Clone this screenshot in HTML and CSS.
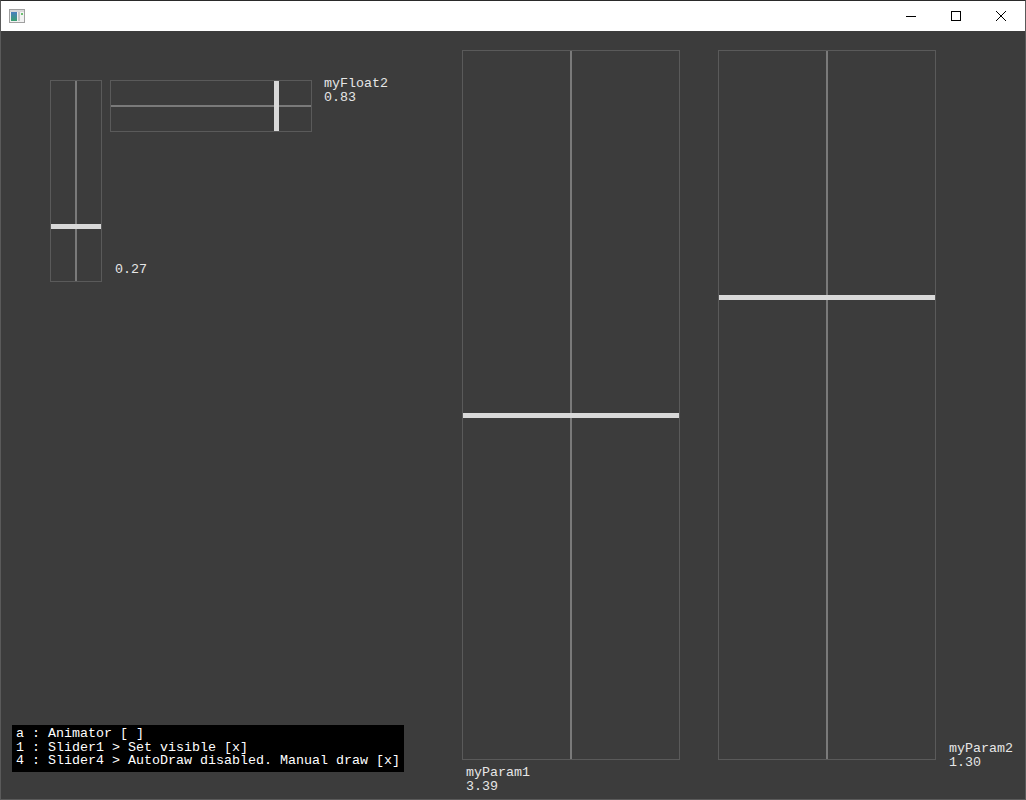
FILE: index.html
```html
<!DOCTYPE html>
<html>
<head>
<meta charset="utf-8">
<link rel="stylesheet" href="styles.css">
</head>
<body>
<div class="window">
  <div class="titlebar">
    <svg class="appicon" width="16" height="14" viewBox="0 0 16 14">
      <defs>
        <linearGradient id="g" x1="0" y1="0" x2="0" y2="1">
          <stop offset="0" stop-color="#4a7fc0"/>
          <stop offset="1" stop-color="#3aa070"/>
        </linearGradient>
      </defs>
      <rect x="0.5" y="0.5" width="15" height="13" fill="#f2f2f2" stroke="#a0a0a0"/>
      <rect x="1" y="1" width="14" height="2" fill="#d8d8d8"/>
      <rect x="2" y="3" width="6" height="9" fill="url(#g)"/>
      <rect x="9" y="3" width="2" height="9" fill="#c8c8c8"/>
      <rect x="12" y="4" width="2" height="2" fill="#6cc070"/>
    </svg>
    <div class="controls">
      <div class="ctl"><svg width="12" height="12" viewBox="0 0 12 12"><path d="M1 6.5h10" stroke="#000" stroke-width="1"/></svg></div>
      <div class="ctl"><svg width="12" height="12" viewBox="0 0 12 12"><rect x="1.5" y="1.5" width="9" height="9" fill="none" stroke="#000" stroke-width="1"/></svg></div>
      <div class="ctl"><svg width="12" height="12" viewBox="0 0 12 12"><path d="M1 1L11 11M11 1L1 11" stroke="#000" stroke-width="1"/></svg></div>
    </div>
  </div>
  <div class="canvas">
    <div class="slider vslider s1">
      <div class="axis-v"></div>
      <div class="handle-h" style="top:143px"></div>
    </div>
    <div class="label l1">0.27</div>

    <div class="slider hslider s2">
      <div class="axis-h"></div>
      <div class="handle-v" style="left:163px"></div>
    </div>
    <div class="label l2">myFloat2<br>0.83</div>

    <div class="slider bigslider s3">
      <div class="axis-v"></div>
      <div class="handle-h" style="top:362px"></div>
    </div>
    <div class="label l3">myParam1<br>3.39</div>

    <div class="slider bigslider s4">
      <div class="axis-v"></div>
      <div class="handle-h" style="top:244px"></div>
    </div>
    <div class="label l4">myParam2<br>1.30</div>

    <div class="help">a : Animator [ ]<br>1 : Slider1 &gt; Set visible [x]<br>4 : Slider4 &gt; AutoDraw disabled. Manual draw [x]</div>
  </div>
</div>
</body>
</html>
```
FILE: styles.css
```css
html, body {
  margin: 0;
  padding: 0;
  background: #3c3c3c;
}
.window {
  width: 1026px;
  height: 800px;
  box-sizing: border-box;
  border: 1px solid #5a5a5a;
  border-top-color: #2a2a2a;
  display: flex;
  flex-direction: column;
  overflow: hidden;
}
.titlebar {
  height: 30px;
  background: #ffffff;
  display: flex;
  align-items: center;
  justify-content: space-between;
  flex: none;
}
.appicon {
  margin-left: 8px;
  margin-top: -1px;
}
.controls {
  display: flex;
  height: 100%;
  margin-right: 2px;
}
.ctl {
  width: 45px;
  height: 100%;
  display: flex;
  align-items: center;
  justify-content: center;
}
.canvas {
  position: relative;
  flex: 1;
  background: #3c3c3c;
  font-family: "Liberation Mono", monospace;
  font-size: 13.333px;
  line-height: 14px;
  color: #e6e6e6;
}
.slider {
  position: absolute;
  box-sizing: border-box;
  border: 1px solid #5a5a5a;
}
.s1 { left: 49px; top: 49px; width: 52px; height: 202px; }
.s2 { left: 109px; top: 49px; width: 202px; height: 52px; }
.s3 { left: 461px; top: 19px; width: 218px; height: 710px; }
.s4 { left: 717px; top: 19px; width: 218px; height: 710px; }
.axis-v {
  position: absolute;
  left: 50%;
  top: 0;
  bottom: 0;
  width: 2px;
  margin-left: -1px;
  background: #7a7a7a;
}
.axis-h {
  position: absolute;
  top: 50%;
  left: 0;
  right: 0;
  height: 2px;
  margin-top: -1px;
  background: #7a7a7a;
}
.handle-h {
  position: absolute;
  left: 0;
  right: 0;
  height: 5px;
  background: #d9d9d9;
}
.handle-v {
  position: absolute;
  top: 0;
  bottom: 0;
  width: 5px;
  background: #d9d9d9;
}
.label {
  position: absolute;
  white-space: nowrap;
}
.l1 { left: 114px; top: 232px; }
.l2 { left: 323px; top: 46px; }
.l3 { left: 465px; top: 735px; }
.l4 { left: 948px; top: 711px; }
.help {
  position: absolute;
  left: 11px;
  top: 694px;
  width: 392px;
  height: 47px;
  box-sizing: border-box;
  padding: 2px 4px;
  background: #000;
  color: #fff;
  line-height: 13.5px;
  white-space: nowrap;
}
```
